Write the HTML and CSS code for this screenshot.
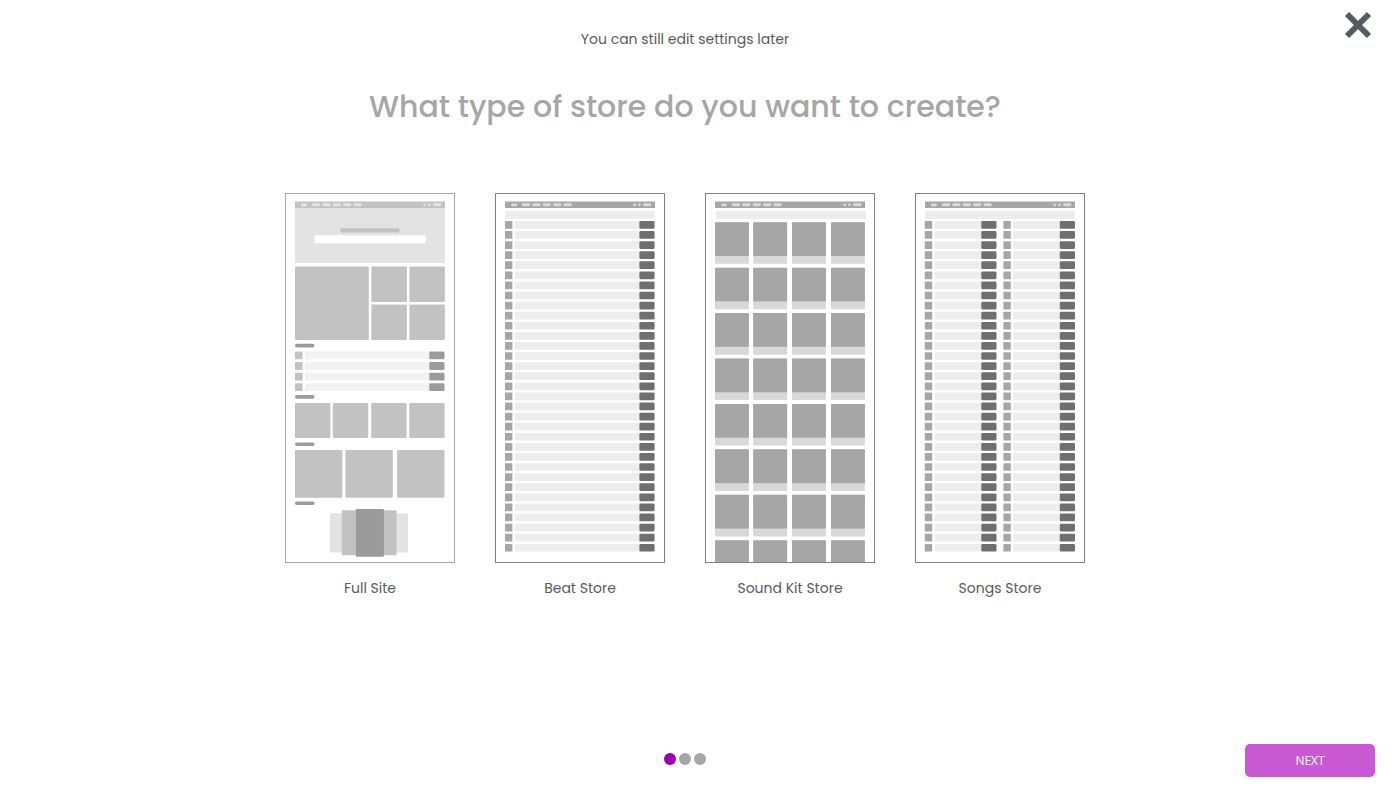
FILE: index.html
```html
<!DOCTYPE html>
<html lang="en">
  <head>
    <meta charset="utf-8">
    <meta name="viewport" content="width=device-width, initial-scale=1">
    <title>Create your store</title>
    <link rel="stylesheet" href="styles.css">
    <script src="thumbs.js" defer></script>
  </head>

  <body>
    <button class="close" type="button" aria-label="Close">
      <svg viewBox="0 0 28 28" aria-hidden="true"><path d="M3 3L25 25M25 3L3 25"/></svg>
    </button>

    <main class="wizard">
      <p class="hint">You can still edit settings later</p>
      <h1>What type of store do you want to create?</h1>

      <div class="stores">
        <button class="store muted" type="button">
          <svg class="thumb" id="fullSite" viewBox="0 0 170 370" aria-hidden="true"></svg>
          <span>Full Site</span>
        </button>
        <button class="store" type="button">
          <svg class="thumb" id="beatStore" viewBox="0 0 170 370" aria-hidden="true"></svg>
          <span>Beat Store</span>
        </button>
        <button class="store" type="button">
          <svg class="thumb" id="kitStore" viewBox="0 0 170 370" aria-hidden="true"></svg>
          <span>Sound Kit Store</span>
        </button>
        <button class="store" type="button">
          <svg class="thumb" id="songStore" viewBox="0 0 170 370" aria-hidden="true"></svg>
          <span>Songs Store</span>
        </button>
      </div>
    </main>

    <footer class="bottom">
      <div class="dots">
        <span class="dot active"></span>
        <span class="dot"></span>
        <span class="dot"></span>
      </div>
      <button class="next" type="button">NEXT</button>
    </footer>
  </body>
</html>
```

FILE: styles.css
```css
* {
  box-sizing: border-box;
}

body {
  margin: 0;
  min-height: 100vh;
  display: flex;
  flex-direction: column;
  background-color: #fff;
  color: #565b61;
  font-family: "Poppins", "Inter", sans-serif;
  font-size: 14px;
}

button {
  font: inherit;
  color: inherit;
  padding: 0;
  border: none;
  background: none;
  cursor: pointer;
}

.close {
  position: absolute;
  top: 11px;
  right: 23px;
  width: 28px;
  height: 28px;
}

.close svg {
  display: block;
  stroke: #565b61;
  stroke-width: 6;
}

.wizard {
  flex: 1;
  padding: 28px 25px 0 0;
  text-align: center;
}

.hint {
  margin: 0;
  line-height: 22px;
}

h1 {
  margin: 33px 0 0;
  font-size: 30px;
  font-weight: 500;
  line-height: 48px;
  color: #a6a6a6;
}

.stores {
  display: flex;
  flex-wrap: wrap;
  justify-content: center;
  gap: 40px;
  margin-top: 62px;
}

.store {
  width: 170px;
}

.store span {
  display: block;
  margin-top: 14px;
  line-height: 22px;
}

/* store previews */
.thumb {
  display: block;
  width: 100%;
}

.frame {
  fill: #fff;
  stroke: #808080;
}

.muted .frame {
  stroke: #a9a9a9;
}

.bottom {
  display: grid;
  grid-template-columns: 1fr auto 1fr;
  align-items: center;
  padding: 0 20px 13px 0;
}

.dots {
  grid-column: 2;
  display: flex;
  gap: 3px;
  margin: 0 5px 3px 0;
}

.dot {
  width: 12px;
  height: 12px;
  border-radius: 50%;
  background-color: #a6a6a6;
}

.dot.active {
  background-color: #9b00b0;
}

.next {
  justify-self: end;
  width: 130px;
  height: 33px;
  border-radius: 5px;
  background-color: #c959d2;
  color: #fff;
  font-family: "Open Sans", "Noto Sans", sans-serif;
  font-size: 12px;
  font-weight: 500;
}
```

FILE: thumbs.js
```javascript
// Draws the wireframe previews of each store type

function box(x, y, w, h, color, r) {
  return '<rect x="' + x + '" y="' + y + '" width="' + w + '" height="' + h +
    '" rx="' + (r || 0) + '" fill="' + color + '"/>';
}

// nav bar with the logo, five links, two dots and a button
function header(bar, item) {
  var out = '<rect class="frame" x=".5" y=".5" width="169" height="369"/>';
  out += box(10, 8.5, 150, 6.5, bar);
  out += '<path d="M19 11.9C18.2 10.7 16.7 10.5 16.7 11.9S18.2 13.1 19 11.9S21.4 10.5 21.4 11.9S19.8 13.1 19 11.9Z" fill="none" stroke="#fff" stroke-width=".9"/>';
  for (var i = 0; i < 5; i++) {
    out += box(26.8 + i * 10.4, 10.3, 8.4, 2.9, item, 1.4);
  }
  out += '<circle cx="139.7" cy="11.8" r="1.4" fill="' + item + '"/>';
  out += '<circle cx="144.4" cy="11.8" r="1.4" fill="' + item + '"/>';
  out += box(148, 10.3, 8.4, 2.9, item, 1.4);
  return out;
}

function row(x, y, end, button) {
  return box(x, y, 7.4, 7.7, '#a6a6a6', 0.5) +
    box(x + 9.8, y, end - x - 24, 7.7, '#ededed', 0.8) +
    box(end - button, y, button, 7.7, '#6f6f6f', 1.3);
}

function fullSite() {
  var out = header('#c2c2c2', '#e3e3e3');
  var i;
  out += box(10, 15, 150, 55, '#e3e3e3');
  out += box(55.3, 35.2, 59.4, 4.4, '#c2c2c2', 1.8);
  out += box(29.5, 42.2, 111.3, 8, '#fff', 0.8);

  out += box(10, 73.4, 73.8, 73.5, '#c2c2c2', 1);
  [73.4, 111.6].forEach(function (y) {
    out += box(86.4, y, 35.5, 35.5, '#c2c2c2', 1);
    out += box(124.4, y, 35.5, 35.5, '#c2c2c2', 1);
  });

  [150.8, 202.1, 249.4, 308.4].forEach(function (y) {
    out += box(10, y, 19.5, 3.7, '#9b9b9b', 1.8);
  });

  for (i = 0; i < 4; i++) {
    var y = 158.5 + i * 10.6;
    out += box(10, y, 7.6, 7.8, '#c2c2c2', 0.5);
    out += box(20, y, 125, 7.8, '#f2f2f2', 0.5);
    out += box(144.3, y, 15.2, 7.8, '#9b9b9b', 1.3);
  }

  [10, 47.8, 86.2, 124.2].forEach(function (x) {
    out += box(x, 210, 35.4, 35, '#c2c2c2', 1);
  });
  [10, 60.4, 112.1].forEach(function (x) {
    out += box(x, 257.1, 47.4, 47.6, '#c2c2c2', 1);
  });

  out += box(45, 320.2, 78, 39.4, '#e3e3e3', 1);
  out += box(56.7, 317.2, 54.9, 45, '#c2c2c2', 1);
  out += box(70.9, 316.1, 28, 47.6, '#9b9b9b', 1);
  return out;
}

function beatStore() {
  var out = header('#a6a6a6', '#dadada') + box(10, 18, 150, 8, '#ededed');
  for (var i = 0; i < 33; i++) {
    out += row(10, 28 + i * 10.09, 159.6, 15.2);
  }
  return out;
}

function songStore() {
  var out = header('#a6a6a6', '#dadada') + box(10, 18, 150, 8, '#ededed');
  for (var i = 0; i < 33; i++) {
    out += row(9.8, 28 + i * 10.09, 81.5, 15.2);
    out += row(88.4, 28 + i * 10.09, 160, 15.2);
  }
  return out;
}

function kitStore() {
  var out = header('#a6a6a6', '#dadada') + box(11, 18, 150, 8, '#ededed');
  for (var i = 0; i < 8; i++) {
    var y = 29.2 + i * 45.43;
    [10, 48.2, 87, 126].forEach(function (x) {
      // the last row runs out of the frame
      var h = Math.min(41.6, 369 - y);
      out += box(x, y, 33.9, h, '#d8d8d8', 1);
      out += box(x, y, 33.9, Math.min(4, h), '#a6a6a6', 1);
      out += box(x, y + 1, 33.9, Math.min(32.8, h - 1), '#a6a6a6');
    });
  }
  return out;
}

document.getElementById('fullSite').innerHTML = fullSite();
document.getElementById('beatStore').innerHTML = beatStore();
document.getElementById('kitStore').innerHTML = kitStore();
document.getElementById('songStore').innerHTML = songStore();
```
